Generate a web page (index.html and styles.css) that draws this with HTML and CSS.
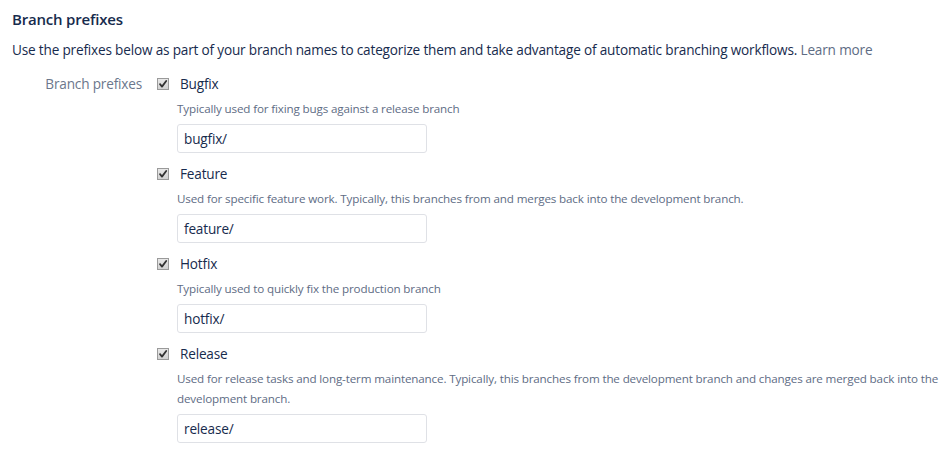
FILE: index.html
```html
<!DOCTYPE html>
<html>
<head>
<meta charset="utf-8">
<link rel="stylesheet" href="styles.css">
</head>
<body>
<section class="page">
  <h2 class="title">Branch prefixes</h2>
  <p class="intro">Use the prefixes below as part of your branch names to categorize them and take advantage of automatic branching workflows. <a class="link" href="#">Learn more</a></p>
  <div class="field">
    <div class="field-label">Branch prefixes</div>
    <div class="options">
      <div class="option">
        <div class="check-row"><span class="check"><svg viewBox="0 0 12 12" width="12" height="12"><path d="M3 6.2 L5 8.6 L9.2 3" fill="none" stroke="#333" stroke-width="1.8" stroke-linecap="round" stroke-linejoin="round"/></svg></span><span class="opt-name">Bugfix</span></div>
        <div class="desc">Typically used for fixing bugs against a release branch</div>
        <div class="input">bugfix/</div>
      </div>
      <div class="option">
        <div class="check-row"><span class="check"><svg viewBox="0 0 12 12" width="12" height="12"><path d="M3 6.2 L5 8.6 L9.2 3" fill="none" stroke="#333" stroke-width="1.8" stroke-linecap="round" stroke-linejoin="round"/></svg></span><span class="opt-name">Feature</span></div>
        <div class="desc">Used for specific feature work. Typically, this branches from and merges back into the development branch.</div>
        <div class="input">feature/</div>
      </div>
      <div class="option">
        <div class="check-row"><span class="check"><svg viewBox="0 0 12 12" width="12" height="12"><path d="M3 6.2 L5 8.6 L9.2 3" fill="none" stroke="#333" stroke-width="1.8" stroke-linecap="round" stroke-linejoin="round"/></svg></span><span class="opt-name">Hotfix</span></div>
        <div class="desc">Typically used to quickly fix the production branch</div>
        <div class="input">hotfix/</div>
      </div>
      <div class="option">
        <div class="check-row"><span class="check"><svg viewBox="0 0 12 12" width="12" height="12"><path d="M3 6.2 L5 8.6 L9.2 3" fill="none" stroke="#333" stroke-width="1.8" stroke-linecap="round" stroke-linejoin="round"/></svg></span><span class="opt-name">Release</span></div>
        <div class="desc">Used for release tasks and long-term maintenance. Typically, this branches from the development branch and changes are merged back into the development branch.</div>
        <div class="input">release/</div>
      </div>
    </div>
  </div>
</section>
</body>
</html>
```
FILE: styles.css
```css
html, body {
  margin: 0;
  padding: 0;
  background: #ffffff;
}
body {
  font-family: "Open Sans", "Noto Sans", sans-serif;
  color: #172b4d;
  font-size: 13.6px;
  letter-spacing: -0.18px;
}
.page {
  padding: 9px 12px 0 12px;
}
.title {
  margin: 0;
  font-size: 15px;
  font-weight: 600;
  line-height: 20px;
  letter-spacing: -0.2px;
  color: #172b4d;
}
.intro {
  margin: 11px 0 0 0;
  line-height: 20px;
}
.link {
  color: #5e6c84;
  text-decoration: none;
}
.field {
  display: flex;
  margin-top: 14px;
}
.field-label {
  width: 130px;
  flex: none;
  text-align: right;
  color: #6b778c;
  line-height: 20px;
}
.options {
  margin-left: 15px;
  display: flex;
  flex-direction: column;
  gap: 11px;
}
.check-row {
  display: flex;
  align-items: center;
  height: 20px;
}
.check {
  width: 10px;
  height: 10px;
  border: 1px solid #9a9a9a;
  background: linear-gradient(#e8e8e8, #d2d2d2);
  display: flex;
  align-items: center;
  justify-content: center;
  margin-top: -1px;
}
.check svg {
  display: block;
  flex: none;
}
.opt-name {
  margin-left: 11px;
  line-height: 20px;
}
.desc {
  margin: 5px 0 0 20px;
  font-size: 11.65px;
  letter-spacing: -0.15px;
  line-height: 20px;
  color: #5e6c84;
}
.input {
  margin: 5px 0 0 20px;
  width: 236px;
  height: 27px;
  border: 1px solid #dfe1e6;
  border-radius: 3px;
  padding: 0 6px;
  line-height: 27px;
  color: #172b4d;
}
```
